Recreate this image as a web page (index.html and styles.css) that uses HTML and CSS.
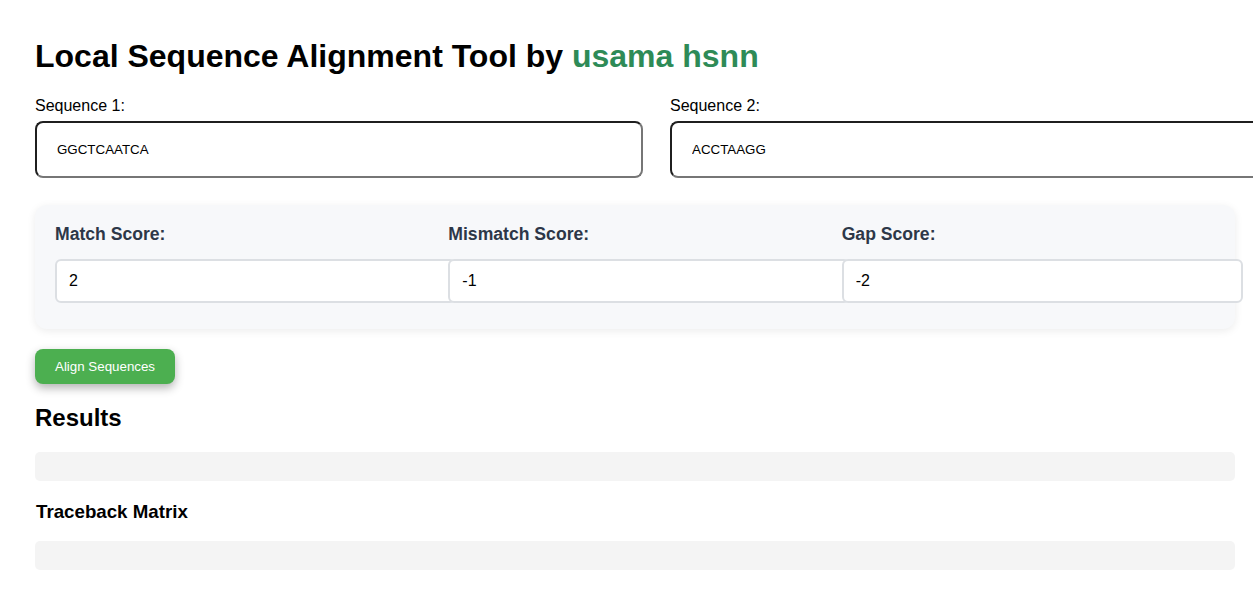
FILE: index.html
```html
<!DOCTYPE html>
<html lang="en">
<head>
<meta charset="utf-8">
<title>Local Sequence Alignment Tool</title>
<link rel="stylesheet" href="styles.css">
</head>
<body>
<div class="page">
  <h1 class="title">Local Sequence Alignment Tool by <span class="author">usama hsnn</span></h1>
  <div class="seq-row">
    <div class="seq-group">
      <label class="seq-label" for="seq1">Sequence 1:</label>
      <input class="seq-input" id="seq1" type="text" value="GGCTCAATCA">
    </div>
    <div class="seq-group">
      <label class="seq-label" for="seq2">Sequence 2:</label>
      <input class="seq-input" id="seq2" type="text" value="ACCTAAGG">
    </div>
  </div>
  <div class="scores">
    <div class="score-group">
      <label class="score-label" for="match">Match Score:</label>
      <input class="score-input" id="match" type="text" value="2">
    </div>
    <div class="score-group">
      <label class="score-label" for="mismatch">Mismatch Score:</label>
      <input class="score-input" id="mismatch" type="text" value="-1">
    </div>
    <div class="score-group">
      <label class="score-label" for="gap">Gap Score:</label>
      <input class="score-input" id="gap" type="text" value="-2">
    </div>
  </div>
  <button class="align-btn" type="button">Align Sequences</button>
  <h2 class="results-title">Results</h2>
  <div class="result-box"></div>
  <h3 class="matrix-title">Traceback Matrix</h3>
  <div class="result-box"></div>
</div>
</body>
</html>
```
FILE: styles.css
```css
html, body {
  margin: 0;
  padding: 0;
  overflow: hidden;
  background: #ffffff;
}
body {
  font-family: "Liberation Sans", Arial, sans-serif;
  color: #000;
}
.page {
  width: 1200px;
  padding: 38px 35px 0 35px;
}
.title {
  margin: 0;
  font-size: 32px;
  font-weight: bold;
  line-height: 37px;
}
.author {
  color: #2e8b57;
}
.seq-row {
  display: flex;
  margin-top: 22px;
}
.seq-group {
  width: 635px;
  flex: none;
}
.seq-label {
  display: block;
  font-size: 16px;
  line-height: 18px;
  margin-bottom: 6px;
}
.seq-input {
  display: block;
  box-sizing: border-box;
  width: 608px;
  height: 57px;
  padding: 0 20px;
  border: 2px solid;
  border-color: #1f1f1f #767676 #767676 #1f1f1f;
  border-radius: 8px;
  font-family: "Liberation Sans", Arial, sans-serif;
  font-size: 13.33px;
  color: #000;
  background: #fff;
  outline: none;
}
.scores {
  margin-top: 27px;
  display: grid;
  grid-template-columns: repeat(3, 1fr);
  gap: 20px;
  padding: 19px 20px 26px 20px;
  background: #f7f8fa;
  border-radius: 12px;
  box-shadow: 0 2px 8px rgba(0, 0, 0, 0.08);
}
.score-group {
  min-width: 0;
}
.score-label {
  display: block;
  font-size: 17.6px;
  font-weight: bold;
  line-height: 20px;
  color: #2d3748;
  margin-bottom: 15px;
}
.score-input {
  display: block;
  box-sizing: content-box;
  width: 100%;
  height: 18px;
  padding: 11px 12px;
  border: 2px solid #dcdfe3;
  border-radius: 6px;
  font-family: "Liberation Sans", Arial, sans-serif;
  font-size: 16px;
  color: #000;
  background: #fff;
  outline: none;
}
.align-btn {
  display: block;
  margin-top: 20px;
  height: 35px;
  padding: 0 20px;
  border: none;
  border-radius: 8px;
  background: #4caf50;
  color: #fff;
  font-family: "Liberation Sans", Arial, sans-serif;
  font-size: 13.33px;
  box-shadow: 0 4px 10px rgba(0, 0, 0, 0.3);
  cursor: pointer;
}
.results-title {
  margin: 20px 0 20px 0;
  font-size: 24px;
  line-height: 28px;
  font-weight: bold;
}
.result-box {
  height: 29px;
  background: #f4f4f4;
  border-radius: 5px;
}
.matrix-title {
  margin: 20px 0 19px 1px;
  font-size: 18.72px;
  line-height: 21px;
  font-weight: bold;
}
```
